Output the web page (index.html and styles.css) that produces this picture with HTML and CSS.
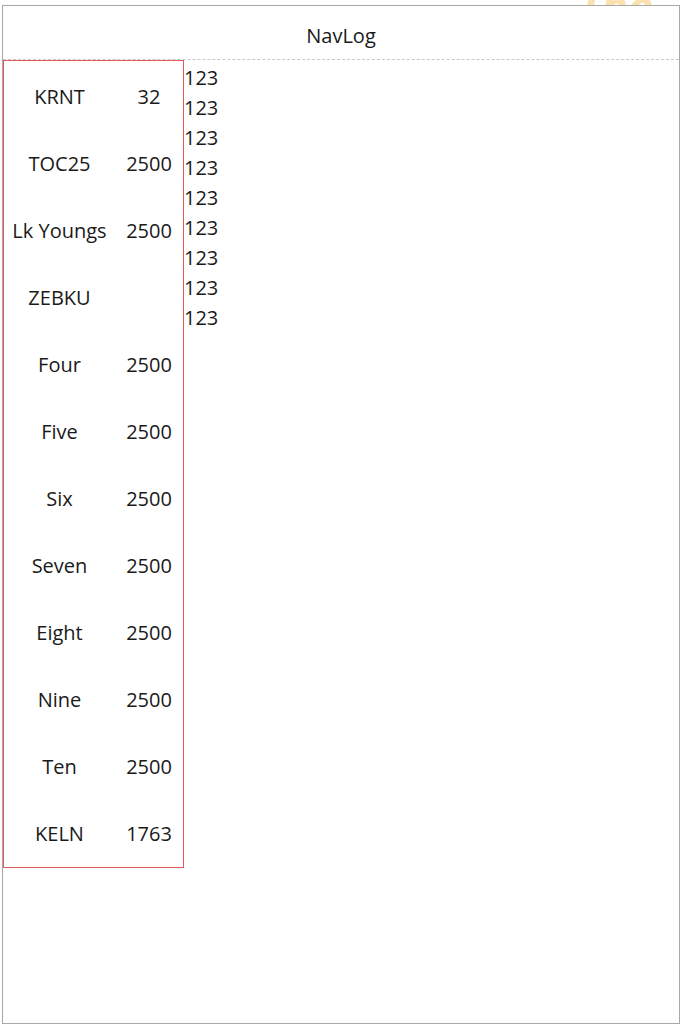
FILE: index.html
```html
<!DOCTYPE html>
<html lang="en">
  <head>
    <meta charset="UTF-8" />
    <meta name="viewport" content="width=device-width, initial-scale=1.0" />
    <title>NavLog</title>
    <link rel="stylesheet" href="styles.css">
  </head>
  <body>
    <div class="watermark">The</div>
    <div class="frame">
      <div class="nav-header">NavLog</div>

      <div class="nav-body">
        <div class="waypoints-box">
          <table class="waypoints">
            <tr><td class="wp-name">KRNT</td><td class="wp-alt">32</td></tr>
            <tr><td class="wp-name">TOC25</td><td class="wp-alt">2500</td></tr>
            <tr><td class="wp-name">Lk Youngs</td><td class="wp-alt">2500</td></tr>
            <tr><td class="wp-name">ZEBKU</td><td class="wp-alt"></td></tr>
            <tr><td class="wp-name">Four</td><td class="wp-alt">2500</td></tr>
            <tr><td class="wp-name">Five</td><td class="wp-alt">2500</td></tr>
            <tr><td class="wp-name">Six</td><td class="wp-alt">2500</td></tr>
            <tr><td class="wp-name">Seven</td><td class="wp-alt">2500</td></tr>
            <tr><td class="wp-name">Eight</td><td class="wp-alt">2500</td></tr>
            <tr><td class="wp-name">Nine</td><td class="wp-alt">2500</td></tr>
            <tr><td class="wp-name">Ten</td><td class="wp-alt">2500</td></tr>
            <tr><td class="wp-name">KELN</td><td class="wp-alt">1763</td></tr>
          </table>
        </div>

        <div class="legs">
          <div>123</div>
          <div>123</div>
          <div>123</div>
          <div>123</div>
          <div>123</div>
          <div>123</div>
          <div>123</div>
          <div>123</div>
          <div>123</div>
        </div>
      </div>
    </div>
  </body>
</html>
```

FILE: styles.css
```css
body,
html {
  margin: 0;
  padding: 0;
  font-family: "Open Sans", "Noto Sans", sans-serif;
  background-color: #ffffff;
  color: #1a1a1a;
}

body {
  padding: 5px 0 0 2px;
  height: 1019px;
  overflow: hidden;
  position: relative;
}

.watermark {
  position: absolute;
  top: -24px;
  left: 578px;
  font-size: 44px;
  font-weight: 700;
  font-style: italic;
  color: #fcd99a;
  opacity: 0.8;
}

.frame {
  position: relative;
  width: 676px;
  height: 1017px;
  border: 1px solid #a8a8a8;
  background-color: #ffffff;
}

.nav-header {
  height: 48px;
  padding-top: 5px;
  display: flex;
  align-items: center;
  justify-content: center;
  font-size: 20px;
  border-bottom: 1px dashed #c8c8c8;
}

.nav-body {
  display: flex;
  align-items: flex-start;
}

.waypoints-box {
  border: 1px solid #e25b5b;
  width: 179px;
  padding-top: 2px;
}

.waypoints {
  border-collapse: collapse;
  width: 100%;
  font-size: 20px;
}

.waypoints tr {
  height: 67px;
}

.wp-name {
  width: 111px;
  text-align: center;
  padding: 0;
}

.wp-alt {
  text-align: center;
  padding: 0;
}

.legs {
  font-size: 20px;
  line-height: 30px;
  margin-top: 3px;
}
```
